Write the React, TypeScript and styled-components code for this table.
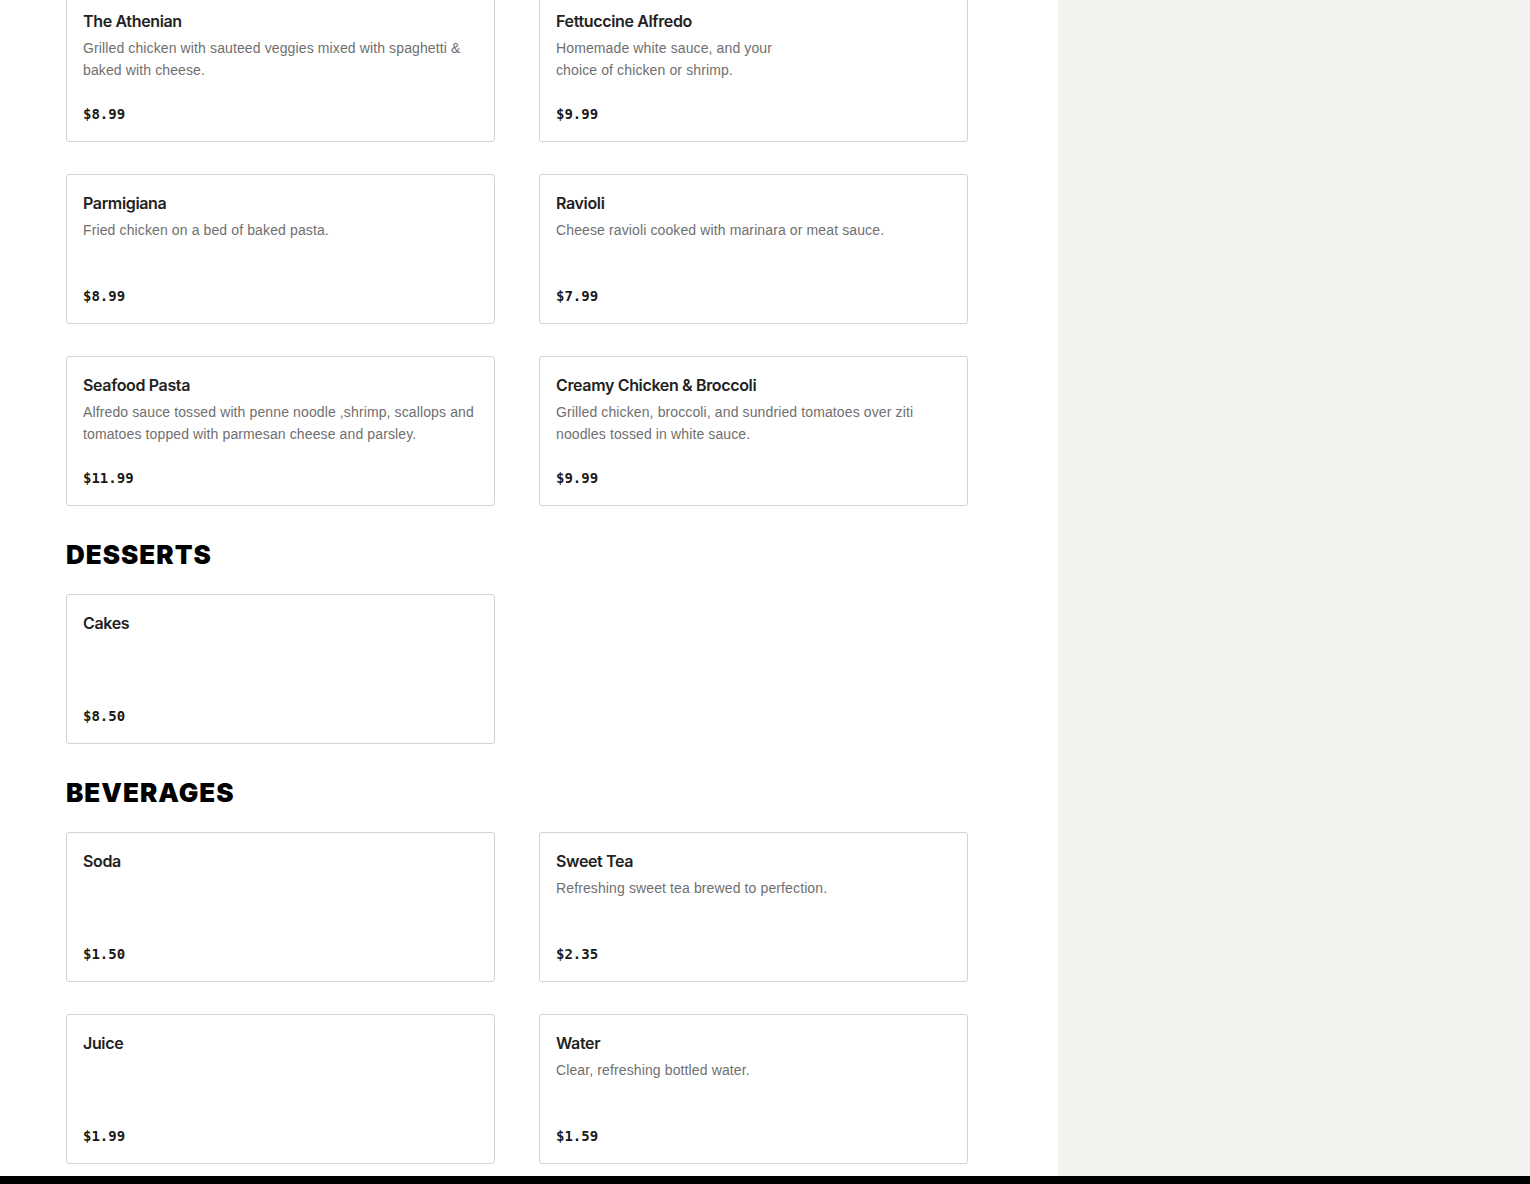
import { FC } from "react";
import styled, { createGlobalStyle } from "styled-components";

const GlobalStyle = createGlobalStyle`
  html, body {
    margin: 0;
    padding: 0;
    background: #ffffff;
    font-family: "Inter", "Liberation Sans", sans-serif;
    color: #191919;
    overflow: hidden;
  }
`;

type MenuItem = {
  name: string;
  description?: string;
  price: string;
};

type Section = {
  title?: string;
  items: MenuItem[];
};

const SECTIONS: Section[] = [
  {
    items: [
      {
        name: "The Athenian",
        description:
          "Grilled chicken with sauteed veggies mixed with spaghetti & baked with cheese.",
        price: "$8.99",
      },
      {
        name: "Fettuccine Alfredo",
        description: "Homemade white sauce, and your\nchoice of chicken or shrimp.",
        price: "$9.99",
      },
      {
        name: "Parmigiana",
        description: "Fried chicken on a bed of baked pasta.",
        price: "$8.99",
      },
      {
        name: "Ravioli",
        description: "Cheese ravioli cooked with marinara or meat sauce.",
        price: "$7.99",
      },
      {
        name: "Seafood Pasta",
        description:
          "Alfredo sauce tossed with penne noodle ,shrimp, scallops and tomatoes topped with parmesan cheese and parsley.",
        price: "$11.99",
      },
      {
        name: "Creamy Chicken & Broccoli",
        description:
          "Grilled chicken, broccoli, and sundried tomatoes over ziti noodles tossed in white sauce.",
        price: "$9.99",
      },
    ],
  },
  {
    title: "DESSERTS",
    items: [{ name: "Cakes", price: "$8.50" }],
  },
  {
    title: "BEVERAGES",
    items: [
      { name: "Soda", price: "$1.50" },
      {
        name: "Sweet Tea",
        description: "Refreshing sweet tea brewed to perfection.",
        price: "$2.35",
      },
      { name: "Juice", price: "$1.99" },
      {
        name: "Water",
        description: "Clear, refreshing bottled water.",
        price: "$1.59",
      },
    ],
  },
];

const Page = styled.div`
  display: flex;
  flex-direction: column;
  min-height: 100vh;
`;

const Body = styled.div`
  display: flex;
  flex: 1;
`;

const Main = styled.main`
  width: 1058px;
  flex-shrink: 0;
  padding: 0 90px 12px 66px;
  box-sizing: border-box;
  margin-top: -8px;
`;

const Aside = styled.aside`
  flex: 1;
  background: #f3f2ef;
`;

const Footer = styled.footer`
  height: 200px;
  background: #000000;
`;

const SectionTitle = styled.h2`
  margin: 33px 0 23px;
  font-family: "Inter", "Liberation Sans", sans-serif;
  font-size: 26px;
  line-height: 32px;
  font-weight: 900;
  letter-spacing: 1px;
  color: #000000;
`;

const Grid = styled.div`
  display: grid;
  grid-template-columns: 429px 429px;
  column-gap: 44px;
  row-gap: 32px;
`;

const Card = styled.div`
  height: 150px;
  box-sizing: border-box;
  padding: 16px;
  border: 1px solid #d3d3d3;
  border-radius: 3px;
  background: #ffffff;
  display: flex;
  flex-direction: column;
`;

const ItemName = styled.div`
  font-size: 16px;
  line-height: 24px;
  font-weight: 600;
  letter-spacing: -0.35px;
  color: #222222;
`;

const ItemDescription = styled.div`
  margin-top: 4px;
  font-family: "Liberation Sans", Arial, sans-serif;
  font-size: 14px;
  line-height: 22px;
  letter-spacing: 0.12px;
  color: #6f6f6f;
  white-space: pre-line;
`;

const Price = styled.div`
  margin-top: auto;
  margin-bottom: 1px;
  font-family: "DejaVu Sans Mono", "Liberation Mono", monospace;
  font-size: 14px;
  line-height: 20px;
  font-weight: 700;
  color: #191919;
`;

const MenuCard: FC<{ item: MenuItem }> = ({ item }) => (
  <Card>
    <ItemName>{item.name}</ItemName>
    {item.description && <ItemDescription>{item.description}</ItemDescription>}
    <Price>{item.price}</Price>
  </Card>
);

export default function App() {
  return (
    <>
      <GlobalStyle />
      <Page>
        <Body>
          <Main>
            {SECTIONS.map((section, i) => (
              <section key={i}>
                {section.title && <SectionTitle>{section.title}</SectionTitle>}
                <Grid>
                  {section.items.map((item) => (
                    <MenuCard key={item.name} item={item} />
                  ))}
                </Grid>
              </section>
            ))}
          </Main>
          <Aside />
        </Body>
        <Footer />
      </Page>
    </>
  );
}
